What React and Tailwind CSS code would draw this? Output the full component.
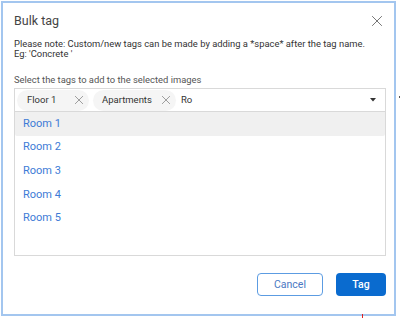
export default function App() {
  const rooms = ["Room 1", "Room 2", "Room 3", "Room 4", "Room 5"];
  const XIcon = ({ size, color, sw }) => (
    <svg width={size} height={size} viewBox="0 0 10 10" fill="none" stroke={color} strokeWidth={sw} strokeLinecap="square">
      <path d="M0.5 0.5 L9.5 9.5 M9.5 0.5 L0.5 9.5" />
    </svg>
  );
  return (
    <div className="relative w-[400px] h-[318px] bg-white" style={{ fontFamily: "Roboto, 'Liberation Sans', sans-serif" }}>
      <div className="ml-[1px] mt-[1px] w-[395px] h-[315px] border-2 border-[#a3c6ef] bg-white flex flex-col pl-[11px] pr-[8px]">
        <div className="flex items-center justify-between pt-[8px] h-[27px]">
          <span className="text-[12.5px] leading-[19px] text-[#444]">Bulk tag</span>
          <span className="mr-[4px]">
            <XIcon size={10} color="#777" sw={1} />
          </span>
        </div>
        <p className="mt-[9px] text-[9.4px] leading-[10.3px] text-[#333] whitespace-nowrap">
          Please note: Custom/new tags can be made by adding a *space* after the tag name.
          <br />
          Eg: 'Concrete '
        </p>
        <p className="mt-[13px] text-[9.4px] leading-[13px] text-[#555]">Select the tags to add to the selected images</p>
        <div className="mt-[2.6px] border border-[#d9d9d9] flex flex-col">
          <div className="h-[23px] flex items-center pl-[2px] pr-[9px] border-b border-[#d9d9d9]">
            <div className="w-[72px] h-[21px] rounded-full bg-[#f5f5f5] flex items-center justify-between pl-[10px] pr-[6.5px]">
              <span className="text-[9.5px] text-[#333]">Floor 1</span>
              <XIcon size={8} color="#888" sw={1} />
            </div>
            <div className="ml-[4px] w-[83px] h-[21px] rounded-full bg-[#f5f5f5] flex items-center justify-between pl-[9px] pr-[6px]">
              <span className="text-[9.5px] text-[#333]">Apartments</span>
              <XIcon size={8} color="#888" sw={1} />
            </div>
            <span className="ml-[5px] text-[9.5px] text-[#333]">Ro</span>
            <span className="ml-auto">
              <svg width="6" height="4" viewBox="0 0 6 4">
                <path d="M0 0 L6 0 L3 3.5 Z" fill="#333" />
              </svg>
            </span>
          </div>
          <div className="h-[143px] flex flex-col">
            {rooms.map((r, i) => (
              <div
                key={r}
                className={
                  i === 0
                    ? "h-[23.6px] flex items-center pl-[8px] bg-[#f0f0f0] rounded-b-[2px] text-[11px] text-[#3d7bd6]"
                    : "h-[23.6px] flex items-center pl-[8px] text-[11px] text-[#3d7bd6]"
                }
              >
                {r}
              </div>
            ))}
          </div>
        </div>
        <div className="mt-[17px] flex justify-end gap-[13px] pr-[0px]">
          <button className="w-[66px] h-[23px] rounded-[4px] border border-[#5c9ce2] text-[10.5px] text-[#4a78c2] bg-white">Cancel</button>
          <button className="w-[50px] h-[23px] rounded-[4px] bg-[#0a6bcf] text-[10.5px] text-white font-medium">Tag</button>
        </div>
      </div>
      <div className="absolute left-[362px] top-[313px] w-[1px] h-[4px] bg-[#e02020]" />
      <div className="absolute left-[399px] top-[95px] w-[1px] h-[2px] bg-[#555]" />
    </div>
  );
}
